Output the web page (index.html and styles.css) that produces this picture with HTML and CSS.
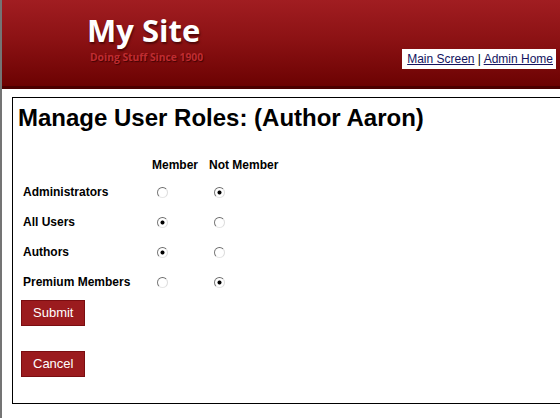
FILE: index.html
```html
<!DOCTYPE html>
<html>
<head>
<meta charset="utf-8">
<title>Manage User Roles</title>
<link rel="stylesheet" href="styles.css">
</head>
<body>
<div class="page">
  <div class="header">
    <div class="brand">
      <div class="site-name">My Site</div>
      <div class="tagline">Doing Stuff Since 1900</div>
    </div>
    <div class="nav-links"><a href="#">Main Screen</a> | <a href="#">Admin Home</a></div>
  </div>
  <div class="content">
    <h1 class="title">Manage User Roles: (Author Aaron)</h1>
    <form class="roles">
      <div class="role-grid">
        <div class="cell head"></div>
        <div class="cell head">Member</div>
        <div class="cell head">Not Member</div>

        <div class="cell label">Administrators</div>
        <div class="cell"><input type="radio" name="r1" class="radio"></div>
        <div class="cell"><input type="radio" name="r1" class="radio" checked></div>

        <div class="cell label">All Users</div>
        <div class="cell"><input type="radio" name="r2" class="radio" checked></div>
        <div class="cell"><input type="radio" name="r2" class="radio"></div>

        <div class="cell label">Authors</div>
        <div class="cell"><input type="radio" name="r3" class="radio" checked></div>
        <div class="cell"><input type="radio" name="r3" class="radio"></div>

        <div class="cell label">Premium Members</div>
        <div class="cell"><input type="radio" name="r4" class="radio"></div>
        <div class="cell"><input type="radio" name="r4" class="radio" checked></div>
      </div>
      <button type="button" class="btn submit">Submit</button>
    </form>
    <button type="button" class="btn cancel">Cancel</button>
  </div>
</div>
</body>
</html>
```

FILE: styles.css
```css
html, body {
  margin: 0;
  padding: 0;
  background: #ffffff;
  overflow: hidden;
}

.page {
  border-left: 2px solid #747474;
  min-height: 418px;
  box-sizing: border-box;
  font-family: "Liberation Sans", Arial, sans-serif;
  color: #000;
}

.header {
  display: flex;
  justify-content: space-between;
  align-items: flex-start;
  height: 86px;
  background: linear-gradient(to bottom, #a11d21 0%, #8c1214 45%, #6c0202 100%);
  border-bottom: 3px solid #4c0000;
}

.brand {
  padding-left: 85px;
  padding-top: 15px;
}

.site-name {
  font-family: "Open Sans", sans-serif;
  font-weight: 700;
  font-size: 31px;
  line-height: 30px;
  color: #ffffff;
  text-shadow: 1px 2px 2px rgba(40, 0, 0, 0.6);
}

.tagline {
  margin-top: 7px;
  margin-left: 3px;
  font-family: "Open Sans", sans-serif;
  font-weight: 700;
  font-size: 10.3px;
  line-height: 11px;
  color: #c02c30;
  text-shadow: 1px 1px 1px rgba(40, 0, 0, 0.7);
}

.nav-links {
  margin-top: 49px;
  margin-right: 4px;
  background: #ffffff;
  padding: 3px 3px 3px 5px;
  font-size: 12px;
  line-height: 14px;
  color: #000;
  white-space: nowrap;
}

.nav-links a {
  color: #13135e;
  text-decoration: underline;
}

.content {
  margin: 8px 0 0 10px;
  border: 1px solid #000;
  border-right: none;
  padding: 6px 0 26px 5px;
}

.title {
  margin: 0;
  font-size: 24px;
  line-height: 28px;
  font-weight: 700;
}

.roles {
  margin: 0;
}

.role-grid {
  display: grid;
  grid-template-columns: 129px 57px 80px;
  grid-template-rows: 24px 30px 30px 30px 30px;
  align-items: center;
  margin: 21px 0 0 5px;
  font-size: 12px;
  line-height: 14px;
  font-weight: 700;
}

.cell {
  display: flex;
  align-items: center;
}

.radio {
  appearance: none;
  -webkit-appearance: none;
  width: 11px;
  height: 11px;
  margin: 0 0 0 5px;
  border-radius: 50%;
  border: 1px solid;
  border-color: #6a6a6a #dcdcdc #e6e6e6 #7a7a7a;
  background: #ffffff;
  box-sizing: border-box;
}

.radio:checked {
  background: radial-gradient(circle at 50% 50%, #000 0, #000 1.6px, #fff 2.4px);
}

.btn {
  display: block;
  font-family: "Liberation Sans", Arial, sans-serif;
  font-size: 13px;
  line-height: 16px;
  color: #ffffff;
  background: #9b1b1e;
  border: 1px solid #7a0d10;
  padding: 4px 11px;
  margin: 0;
  border-radius: 0;
}

.submit {
  margin: 3px 0 0 3px;
}

.cancel {
  margin: 25px 0 0 3px;
}
```
